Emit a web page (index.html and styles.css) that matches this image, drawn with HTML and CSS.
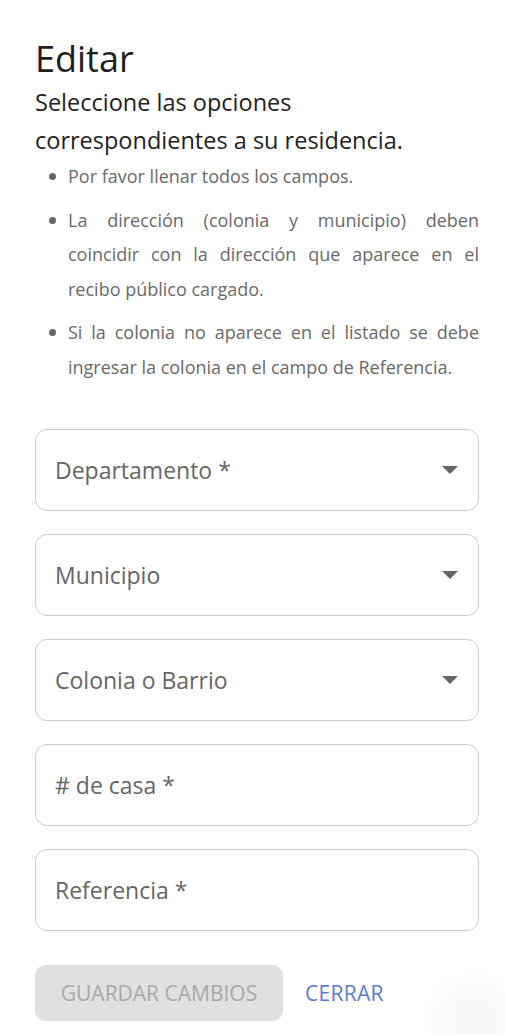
FILE: index.html
```html
<!DOCTYPE html>
<html lang="es">

<head>
    <meta charset="UTF-8">
    <meta name="viewport" content="width=device-width, initial-scale=1.0">
    <title>Editar residencia</title>
    <link rel="stylesheet" href="styles.css">
</head>

<body>
    <main class="dialog">
        <h1 class="title">Editar</h1>
        <p class="subtitle">Seleccione las opciones correspondientes a su residencia.</p>
        <ul class="notes">
            <li>Por favor llenar todos los campos.</li>
            <li>La dirección (colonia y municipio) deben coincidir con la dirección que aparece en el recibo público cargado.</li>
            <li>Si la colonia no aparece en el listado se debe ingresar la colonia en el campo de Referencia.</li>
        </ul>

        <form class="fields">
            <div class="field select">
                <span class="label">Departamento *</span>
                <span class="arrow"></span>
            </div>
            <div class="field select">
                <span class="label">Municipio</span>
                <span class="arrow"></span>
            </div>
            <div class="field select">
                <span class="label">Colonia o Barrio</span>
                <span class="arrow"></span>
            </div>
            <div class="field">
                <span class="label"># de casa *</span>
            </div>
            <div class="field">
                <span class="label">Referencia *</span>
            </div>
        </form>

        <div class="actions">
            <button type="button" class="btn-save" disabled>GUARDAR CAMBIOS</button>
            <button type="button" class="btn-close">CERRAR</button>
        </div>
        <div class="fab-shadow"></div>
    </main>
</body>

</html>
```

FILE: styles.css
```css
* {
    padding: 0px;
    margin: 0px;
    box-sizing: border-box;
}

body {
    background-color: #ffffff;
    font-family: 'Open Sans', 'Noto Sans', sans-serif;
    color: #222222;
    overflow: hidden;
}

.dialog {
    position: relative;
    width: 505px;
    height: 1034px;
    overflow: hidden;
    padding: 36px 26px 0px 35px;
}

.title {
    font-size: 36px;
    font-weight: 400;
    line-height: 46px;
    color: #1e1e1e;
}

.subtitle {
    margin-top: 1px;
    font-size: 23.5px;
    line-height: 38px;
    color: #222222;
}

.notes {
    list-style: none;
    margin-top: 0px;
    padding-left: 33px;
}

.notes li {
    position: relative;
    font-size: 18px;
    line-height: 34.5px;
    color: #6a6a6a;
    text-align: justify;
    margin-bottom: 9px;
}

.notes li::before {
    content: "";
    position: absolute;
    left: -19px;
    top: 14px;
    width: 7px;
    height: 7px;
    border-radius: 50%;
    background-color: #666666;
}

.fields {
    display: flex;
    flex-direction: column;
    gap: 23px;
    margin-top: 45px;
}

.field {
    display: flex;
    align-items: center;
    justify-content: space-between;
    height: 82px;
    padding: 0px 20px 0px 19px;
    border: 1.5px solid #cdcdcd;
    border-radius: 12px;
}

.label {
    font-size: 23px;
    color: #666666;
}

.arrow {
    width: 0px;
    height: 0px;
    border-left: 8px solid transparent;
    border-right: 8px solid transparent;
    border-top: 8px solid #666666;
}

.actions {
    display: flex;
    align-items: center;
    gap: 22px;
    margin-top: 34px;
}

.btn-save {
    width: 248px;
    height: 56px;
    border: none;
    border-radius: 11px;
    background-color: #e0e0e0;
    color: #a9a9a9;
    font-family: inherit;
    font-size: 21px;
}

.btn-close {
    border: none;
    background: none;
    color: #5c7bd6;
    font-family: inherit;
    font-size: 21px;
    letter-spacing: 0.3px;
}

.fab-shadow {
    position: absolute;
    right: -30px;
    bottom: -40px;
    width: 120px;
    height: 110px;
    border-radius: 50%;
    background: radial-gradient(closest-side, rgba(0, 0, 0, 0.04), rgba(0, 0, 0, 0));
}
```
